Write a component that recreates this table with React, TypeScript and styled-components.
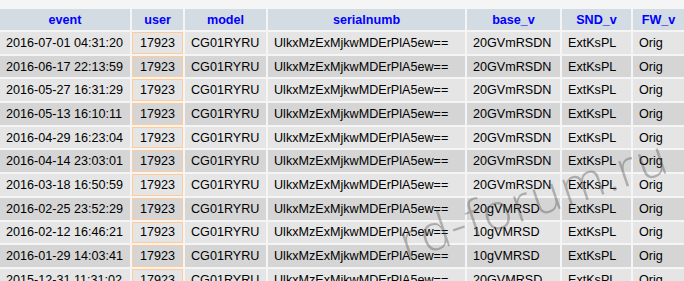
import React from "react";
import styled, { createGlobalStyle } from "styled-components";

const Global = createGlobalStyle`
  html, body { margin: 0; padding: 0; background: #f5f5f5; }
  body { font-family: "Liberation Sans", Arial, sans-serif; overflow: hidden; }
`;

const Page = styled.div`
  position: relative;
  width: 684px;
  height: 281px;
  overflow: hidden;
  padding-top: 7px;
  box-sizing: border-box;
`;

const Table = styled.table`
  border-collapse: separate;
  border-spacing: 2px;
  table-layout: fixed;
  margin-left: -2px;
  width: 700px;
  font-size: 12.6px;
  color: #000;
`;

const Th = styled.th<{ $w: number }>`
  width: ${(p) => p.$w}px;
  height: 21px;
  padding: 0;
  background: #d3dce3;
  color: #0000ff;
  font-weight: bold;
  text-align: center;
  box-sizing: border-box;
  white-space: nowrap;
`;

const Tr = styled.tr<{ $even: boolean }>`
  height: 21.7px;
  background: ${(p) => (p.$even ? "#d5d5d5" : "#e5e5e5")};
`;

const Td = styled.td<{ $center?: boolean; $marked?: boolean }>`
  padding: 0 0 0 6px;
  box-sizing: border-box;
  white-space: nowrap;
  overflow: hidden;
  text-align: ${(p) => (p.$center ? "center" : "left")};
  ${(p) => (p.$marked ? "border: 1px solid #ffcc99; padding: 0;" : "")}
`;

const Watermark = styled.div`
  position: absolute;
  left: 408px;
  top: 216px;
  font-family: "Open Sans", "Liberation Sans", sans-serif;
  font-weight: 300;
  font-size: 50px;
  letter-spacing: 1.5px;
  color: rgba(80, 80, 80, 0.38);
  transform: rotate(-18.5deg);
  transform-origin: left bottom;
  white-space: nowrap;
  pointer-events: none;
  line-height: 1;
`;

const cols = [
  { name: "event", w: 130 },
  { name: "user", w: 51 },
  { name: "model", w: 81 },
  { name: "serialnumb", w: 197 },
  { name: "base_v", w: 93 },
  { name: "SND_v", w: 69 },
  { name: "FW_v", w: 51 },
  { name: "", w: 20 },
];

const rows: [string, string][] = [
  ["2016-07-01 04:31:20", "20GVmRSDN"],
  ["2016-06-17 22:13:59", "20GVmRSDN"],
  ["2016-05-27 16:31:29", "20GVmRSDN"],
  ["2016-05-13 16:10:11", "20GVmRSDN"],
  ["2016-04-29 16:23:04", "20GVmRSDN"],
  ["2016-04-14 23:03:01", "20GVmRSDN"],
  ["2016-03-18 16:50:59", "20GVmRSDN"],
  ["2016-02-25 23:52:29", "20gVMRSD"],
  ["2016-02-12 16:46:21", "10gVMRSD"],
  ["2016-01-29 14:03:41", "10gVMRSD"],
  ["2015-12-31 11:31:02", "20GVMRSD"],
];

export default function App() {
  return (
    <Page>
      <Global />
      <Table>
        <thead>
          <tr>
            {cols.map((c, i) => (
              <Th key={i} $w={c.w}>
                {c.name}
              </Th>
            ))}
          </tr>
        </thead>
        <tbody>
          {rows.map(([ev, base], i) => (
            <Tr key={i} $even={i % 2 === 1}>
              <Td>{ev}</Td>
              <Td $center $marked>
                17923
              </Td>
              <Td>CG01RYRU</Td>
              <Td>UlkxMzExMjkwMDErPlA5ew==</Td>
              <Td>{base}</Td>
              <Td>ExtKsPL</Td>
              <Td>Orig</Td>
              <Td />
            </Tr>
          ))}
        </tbody>
      </Table>
      <Watermark>rd-forum.ru</Watermark>
    </Page>
  );
}
